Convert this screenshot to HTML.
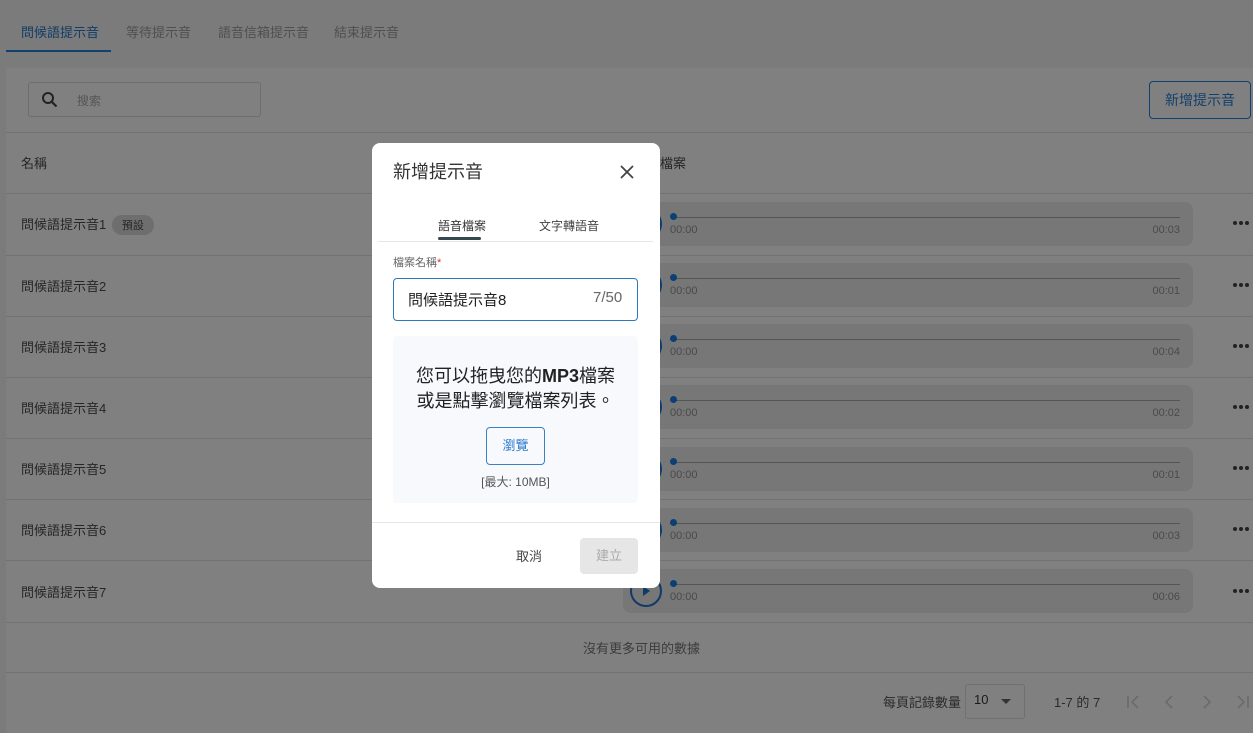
<!DOCTYPE html>
<html><head><meta charset="utf-8"><style>
*{margin:0;padding:0;box-sizing:border-box}
body{width:1253px;height:733px;overflow:hidden;background:#7b7b7b;font-family:"Liberation Sans","Noto Sans CJK TC",sans-serif;position:relative;color:#2a2a2a}
.a{position:absolute;white-space:nowrap}
.tab{font-size:13px;color:#4f4f4f;top:22px}
.card{position:absolute;left:6px;top:68px;width:1247px;height:665px;background:#808080}
.hl{position:absolute;left:6px;width:1247px;height:1px;background:#727272}
.rowt{font-size:13px;color:#262626;left:21px}
.pl{position:absolute;left:623px;width:570px;height:44px;background:#777;border-radius:8px}
.pl .ln{position:absolute;left:50px;right:13px;top:15px;height:1px;background:#555}
.pl .dt{position:absolute;left:47px;top:11px;width:7px;height:7px;border-radius:50%;background:#0c3f73}
.pl .t0{position:absolute;left:47px;top:22px;font-size:11px;color:#4a4a4a}
.pl .t1{position:absolute;right:13px;top:22px;font-size:11px;color:#4a4a4a}
.pl .pc{position:absolute;left:7px;top:6px;width:32px;height:32px;border:2px solid #0f3a6a;border-radius:50%}
.dots{position:absolute;left:1233px;width:16px;height:4px}
.dots i{position:absolute;top:0;width:4px;height:4px;border-radius:50%;background:#222}
</style></head><body>
<div class="a tab" style="left:21px;color:#123d66">問候語提示音</div>
<div class="a" style="left:6px;top:50px;width:105px;height:2px;background:#12416d"></div>
<div class="a tab" style="left:126px">等待提示音</div>
<div class="a tab" style="left:218px">語音信箱提示音</div>
<div class="a tab" style="left:334px">結束提示音</div>
<div class="card"></div>
<div class="a" style="left:28px;top:82px;width:233px;height:35px;border:1px solid #6e6e6e;border-radius:3px"></div>
<svg class="a" style="left:41px;top:91px" width="18" height="18" viewBox="0 0 18 18"><circle cx="7" cy="7" r="5" fill="none" stroke="#222" stroke-width="2"/><path d="M10.5 10.5l5 5" stroke="#222" stroke-width="2.2"/></svg>
<div class="a" style="left:77px;top:92px;font-size:12px;color:#555">搜索</div>
<div class="a" style="left:1149px;top:81px;width:102px;height:38px;border:1px solid #123f6b;border-radius:4px;color:#123f6b;font-size:14px;text-align:center;line-height:36px">新增提示音</div>
<div class="hl" style="top:132px"></div>
<div class="a rowt" style="top:153px">名稱</div>
<div class="a rowt" style="top:153px;left:660px">檔案</div>
<div class="hl" style="top:193px"></div>

<div class="a rowt" style="top:214px">問候語提示音1 <span style="display:inline-block;background:#6e6e6e;border-radius:10px;padding:2px 10px;font-size:11px;margin-left:2px">預設</span></div>
<div class="pl" style="top:202px"><div class="pc"></div><div class="ln"></div><div class="dt"></div><div class="t0">00:00</div><div class="t1">00:03</div></div>
<div class="dots" style="top:221px"><i style="left:0"></i><i style="left:6px"></i><i style="left:12px"></i></div>
<div class="hl" style="top:255px"></div>
<div class="a rowt" style="top:276px">問候語提示音2</div>
<div class="pl" style="top:263px"><div class="pc"></div><div class="ln"></div><div class="dt"></div><div class="t0">00:00</div><div class="t1">00:01</div></div>
<div class="dots" style="top:283px"><i style="left:0"></i><i style="left:6px"></i><i style="left:12px"></i></div>
<div class="hl" style="top:316px"></div>
<div class="a rowt" style="top:337px">問候語提示音3</div>
<div class="pl" style="top:324px"><div class="pc"></div><div class="ln"></div><div class="dt"></div><div class="t0">00:00</div><div class="t1">00:04</div></div>
<div class="dots" style="top:344px"><i style="left:0"></i><i style="left:6px"></i><i style="left:12px"></i></div>
<div class="hl" style="top:377px"></div>
<div class="a rowt" style="top:398px">問候語提示音4</div>
<div class="pl" style="top:385px"><div class="pc"></div><div class="ln"></div><div class="dt"></div><div class="t0">00:00</div><div class="t1">00:02</div></div>
<div class="dots" style="top:405px"><i style="left:0"></i><i style="left:6px"></i><i style="left:12px"></i></div>
<div class="hl" style="top:438px"></div>
<div class="a rowt" style="top:459px">問候語提示音5</div>
<div class="pl" style="top:447px"><div class="pc"></div><div class="ln"></div><div class="dt"></div><div class="t0">00:00</div><div class="t1">00:01</div></div>
<div class="dots" style="top:466px"><i style="left:0"></i><i style="left:6px"></i><i style="left:12px"></i></div>
<div class="hl" style="top:499px"></div>
<div class="a rowt" style="top:520px">問候語提示音6</div>
<div class="pl" style="top:508px"><div class="pc"></div><div class="ln"></div><div class="dt"></div><div class="t0">00:00</div><div class="t1">00:03</div></div>
<div class="dots" style="top:527px"><i style="left:0"></i><i style="left:6px"></i><i style="left:12px"></i></div>
<div class="hl" style="top:560px"></div>
<div class="a rowt" style="top:582px">問候語提示音7</div>
<div class="pl" style="top:569px"><div class="pc"><svg width="28" height="28" viewBox="0 0 28 28"><path d="M11 9l7 5-7 5z" fill="#0f3a6a"/></svg></div><div class="ln"></div><div class="dt"></div><div class="t0">00:00</div><div class="t1">00:06</div></div>
<div class="dots" style="top:589px"><i style="left:0"></i><i style="left:6px"></i><i style="left:12px"></i></div>
<div class="hl" style="top:622px"></div>
<div class="a" style="left:583px;top:638px;font-size:13px;color:#3c3c3c">沒有更多可用的數據</div>
<div class="hl" style="top:672px"></div>
<div class="a" style="left:883px;top:692px;font-size:13px;color:#2a2a2a">每頁記錄數量</div>
<div class="a" style="left:965px;top:684px;width:60px;height:35px;border:1px solid #707070;border-radius:3px"></div>
<div class="a" style="left:974px;top:692px;font-size:13px;color:#1a1a1a">10</div>
<div class="a" style="left:1001px;top:699px;width:0;height:0;border-left:5px solid transparent;border-right:5px solid transparent;border-top:5px solid #333"></div>
<div class="a" style="left:1054px;top:692px;font-size:13px;color:#2a2a2a">1-7 的 7</div>
<svg class="a" style="left:1122px;top:690px" width="131" height="24" viewBox="0 0 131 24"><g fill="none" stroke="#6a6a6a" stroke-width="1.6"><path d="M6 6v12M16 6l-6 6 6 6"/><path d="M50 6l-6 6 6 6"/><path d="M82 6l6 6-6 6"/><path d="M116 6l6 6-6 6M126 6v12"/></g></svg>

<div class="a" style="left:372px;top:143px;width:288px;height:445px;background:#fff;border-radius:8px"></div>
<div class="a" style="left:393px;top:158px;font-size:18px;color:#333">新增提示音</div>
<svg class="a" style="left:619px;top:164px" width="16" height="16" viewBox="0 0 16 16"><path d="M2 2l12 12M14 2L2 14" stroke="#444" stroke-width="1.8"/></svg>
<div class="a" style="left:438px;top:217px;font-size:12px;color:#333">語音檔案</div>
<div class="a" style="left:438px;top:237px;width:43px;height:3px;background:#37474f;border-radius:2px"></div>
<div class="a" style="left:539px;top:217px;font-size:12px;color:#444">文字轉語音</div>
<div class="a" style="left:378px;top:241px;width:275px;height:1px;background:#e6e6e6"></div>
<div class="a" style="left:393px;top:254px;font-size:11px;color:#666">檔案名稱<span style="color:#d33">*</span></div>
<div class="a" style="left:393px;top:278px;width:245px;height:43px;border:1px solid #2a7ac0;border-radius:4px"></div>
<div class="a" style="left:408px;top:289px;font-size:15px;color:#222">問候語提示音8</div>
<div class="a" style="left:593px;top:289px;font-size:15px;color:#666">7/50</div>
<div class="a" style="left:393px;top:336px;width:245px;height:167px;background:#f7f9fd;border-radius:4px"></div>
<div class="a" style="left:393px;top:364px;width:245px;text-align:center;font-size:18px;line-height:25px;color:#222">您可以拖曳您的<b>MP3</b>檔案<br>或是點擊瀏覽檔案列表。</div>
<div class="a" style="left:486px;top:427px;width:59px;height:38px;border:1px solid #3c80c4;border-radius:4px;color:#2f7ad0;font-size:13px;text-align:center;line-height:36px">瀏覽</div>
<div class="a" style="left:393px;top:473px;width:245px;text-align:center;font-size:12px;color:#555">[最大: 10MB]</div>
<div class="a" style="left:372px;top:522px;width:288px;height:1px;background:#e6e6e6"></div>
<div class="a" style="left:516px;top:546px;font-size:13px;color:#444">取消</div>
<div class="a" style="left:580px;top:538px;width:58px;height:36px;background:#e6e6e6;border-radius:4px;color:#aaa;font-size:13px;text-align:center;line-height:36px">建立</div>
</body></html>
